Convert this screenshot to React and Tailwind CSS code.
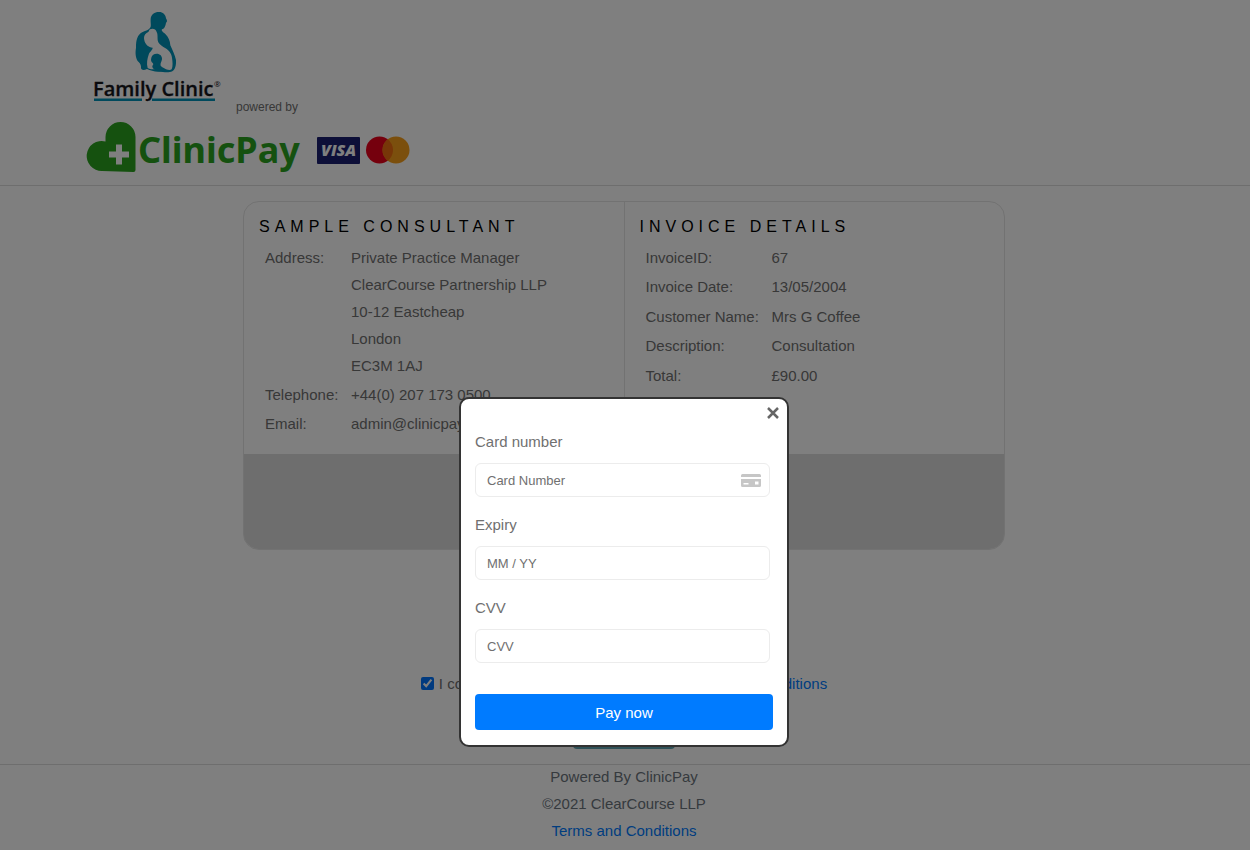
const consultant = [
  {
    label: "Address:",
    lines: [
      "Private Practice Manager",
      "ClearCourse Partnership LLP",
      "10-12 Eastcheap",
      "London",
      "EC3M 1AJ",
    ],
  },
  { label: "Telephone:", lines: ["+44(0) 207 173 0500"] },
  { label: "Email:", lines: ["admin@clinicpay.co.uk"] },
];

const invoice = [
  { label: "InvoiceID:", lines: ["67"] },
  { label: "Invoice Date:", lines: ["13/05/2004"] },
  { label: "Customer Name:", lines: ["Mrs G Coffee"] },
  { label: "Description:", lines: ["Consultation"] },
  { label: "Total:", lines: ["£90.00"] },
];

function FamilyClinicLogo() {
  return (
    <svg
      className="h-[112px] w-[144px]"
      viewBox="0 0 144 112"
      role="img"
      aria-label="Family Clinic"
    >
      <g transform="translate(-5 0) scale(0.33333)">
        <path
          fill="#0092b8"
          d="M236 36 C247 35 257 43 258 55 C262 61 262 66 258 68 C257 76 254 86 246 88 C243 93 250 97 256 102 C266 112 270 122 271 136 C277 150 285 165 288 180 C289 195 286 208 277 214 C266 219 249 216 238 215 C224 216 211 211 201 207 C193 210 186 212 183 205 C184 197 181 191 176 186 C167 178 165 160 168 143 C168 120 172 104 188 96 C198 91 206 90 210 84 C215 79 211 68 212 56 C213 44 224 36 236 36 Z"
        />
        <path
          fill="#fff"
          d="M210 88 C219 84 227 87 230 96 C234 103 232 112 233 121 C234 130 242 136 250 141 C265 148 275 160 276 173 C278 186 279 199 275 208 C270 212 264 209 258 208 C250 208 242 209 236 208 C224 208 211 209 203 204 C199 190 202 175 206 164 C208 155 218 151 218 143 C206 143 195 133 193 121 C190 110 195 100 204 97 C208 95 206 90 210 88 Z"
        />
        <path
          fill="#0092b8"
          d="M230 161 C240 161 247 168 246 178 C245 186 240 190 242 197 C247 203 253 204 258 208 L256 215 L228 213 C224 208 216 205 217 198 C220 194 221 192 218 189 C213 185 212 180 214 173 C216 165 222 161 230 161 Z"
        />
      </g>
      <text
        x="8"
        y="96"
        fontFamily="'Open Sans', 'Noto Sans', sans-serif"
        fontSize="20"
        fontWeight="600"
        fill="#15151a"
        stroke="#15151a"
        strokeWidth="0.3"
      >
        Family Clinic
      </text>
      <text x="129" y="87" fontFamily="'Open Sans', sans-serif" fontSize="8" fill="#15151a">
        ®
      </text>
      <path fill="#0092b8" d="M9 98.500h48v2.500h-48zM67 98.500h63v2.500h-63z" />
    </svg>
  );
}

function ClinicPayLogo() {
  return (
    <svg
      className="h-[54px] w-[220px]"
      viewBox="0 0 220 54"
      role="img"
      aria-label="ClinicPay"
    >
      <path
        fill="#2aa31f"
        d="M20.500 21.500 V17 A15 15 0 0 1 50.500 17 V50 Q50.500 52 48.500 52 L17 51 A15 15 0 1 1 20.500 21.500 Z"
      />
      <path fill="#fff" d="M31 24.500h6v7h7v6h-7v7h-6v-7h-7v-6h7z" />
      <text
        x="53"
        y="43"
        fontFamily="'Noto Sans', 'Open Sans', sans-serif"
        fontSize="36"
        fontWeight="700"
        fill="#2aa31f"
      >
        ClinicPay
      </text>
    </svg>
  );
}

function CardBrands() {
  return (
    <svg
      className="h-7 w-[93px]"
      viewBox="0 0 93 28"
      role="img"
      aria-label="Visa and Mastercard"
    >
      <rect x="0" y="1" width="43" height="27" rx="1" fill="#1a1f71" />
      <text
        x="4"
        y="20"
        fontFamily="'Open Sans', 'Noto Sans', sans-serif"
        fontSize="16"
        fontStyle="italic"
        fontWeight="800"
        fill="#fff"
      >
        VISA
      </text>
      <circle cx="62.500" cy="14" r="13.500" fill="#eb001b" />
      <circle cx="79" cy="14" r="13.500" fill="#f79e1b" />
      <path fill="#ee6c10" d="M70.750 3.300a13.500 13.500 0 0 1 0 21.400a13.500 13.500 0 0 1 0-21.400z" />
    </svg>
  );
}

function CardIcon() {
  return (
    <svg className="h-[13px] w-5" viewBox="0 0 20 13" aria-hidden="true">
      <path fill="#c6c6c6" d="M1.500 0h17A1.500 1.500 0 0 1 20 1.500V3H0V1.500A1.500 1.500 0 0 1 1.500 0z" />
      <path
        fill="#c6c6c6"
        fillRule="evenodd"
        d="M0 5h20v6.500a1.500 1.500 0 0 1-1.500 1.500h-17A1.500 1.500 0 0 1 0 11.500zM2.500 9v1.500h5V9zM14 7.500v3h3.500v-3z"
      />
    </svg>
  );
}

function CloseIcon() {
  return (
    <svg className="size-3" viewBox="0 0 12 12" aria-hidden="true">
      <path d="M1 1l10 10M11 1L1 11" stroke="currentColor" strokeWidth="2.500" />
    </svg>
  );
}

function DetailPanel({ title, rows, labelWidth, tableHeight }) {
  return (
    <section className="flex-1 px-[15px] pt-[13px] pb-[15px]">
      <h2 className="text-base leading-6 tracking-[5px] text-black uppercase">{title}</h2>
      <table className={`mt-1 ml-[5px] ${tableHeight}`}>
        <tbody>
          {rows.map((row) => (
            <tr key={row.label}>
              <th scope="row" className={`${labelWidth} p-px text-left align-top font-normal`}>
                {row.label}
              </th>
              <td className="p-px align-top">
                {row.lines.map((line) => (
                  <div key={line}>{line}</div>
                ))}
              </td>
            </tr>
          ))}
        </tbody>
      </table>
    </section>
  );
}

function Field({ id, label, placeholder, icon }) {
  return (
    <div className="mr-[3px] mb-[14px]">
      <label htmlFor={id} className="mb-2 block">
        {label}
      </label>
      <div className="relative">
        <input
          id={id}
          type="text"
          inputMode="numeric"
          placeholder={placeholder}
          className="block h-[34px] w-full rounded-md border border-[#ececec] bg-white px-[11px] text-[13px] text-[#555] placeholder:text-[#707070]"
        />
        {icon && <span className="absolute inset-y-0 right-[9px] flex items-center">{icon}</span>}
      </div>
    </div>
  );
}

function PaymentDialog() {
  return (
    <div className="fixed inset-0 flex items-start justify-center bg-black/50 pt-[397px] pr-0.5">
      <div
        role="dialog"
        aria-label="Card payment"
        aria-modal="true"
        className="relative w-[330px] rounded-[10px] border-2 border-[#333] bg-white px-[14px] pt-[29px] pb-[15px]"
      >
        <button
          type="button"
          aria-label="Close"
          className="absolute top-1 right-1 flex size-5 items-center justify-center text-[#666]"
        >
          <CloseIcon />
        </button>
        <form onSubmit={(event) => event.preventDefault()}>
          <Field id="card-number" label="Card number" placeholder="Card Number" icon={<CardIcon />} />
          <Field id="expiry" label="Expiry" placeholder="MM / YY" />
          <Field id="cvv" label="CVV" placeholder="CVV" />
          <button
            type="submit"
            className="mt-[31px] block h-9 w-full rounded bg-[#007bff] text-white"
          >
            Pay now
          </button>
        </form>
      </div>
    </div>
  );
}

export default function App() {
  return (
    <div className="min-h-screen bg-white font-['Liberation_Sans',Arial,sans-serif] text-[15px] leading-[27px] text-[#707070]">
      <header className="border-b border-[#dcdcdc] pb-[11px]">
        <div className="mx-auto max-w-[1080px]">
          <div className="flex items-end gap-[7px]">
            <FamilyClinicLogo />
            <span className="text-xs leading-[10px]">powered by</span>
          </div>
          <div className="mt-2 flex items-end gap-3">
            <ClinicPayLogo />
            <div className="pb-[10px]">
              <CardBrands />
            </div>
          </div>
        </div>
      </header>

      <main className="pt-[15px] pr-0.5">
        <div className="mx-auto max-w-[762px] overflow-hidden rounded-2xl border border-[#e4e4e4]">
          <div className="flex min-h-[252px] divide-x divide-[#e4e4e4]">
            <DetailPanel
              title="Sample Consultant"
              rows={consultant}
              labelWidth="w-[86px]"
              tableHeight="h-auto"
            />
            <DetailPanel
              title="Invoice Details"
              rows={invoice}
              labelWidth="w-[126px]"
              tableHeight="h-[147px]"
            />
          </div>
          <div className="h-[95px] bg-[#dcdcdc]" />
        </div>

        <div className="mt-[120px] flex items-center justify-center gap-[5px]">
          <input id="consent" type="checkbox" defaultChecked className="size-[13px] accent-[#0075ff]" />
          <span>
            <label htmlFor="consent">I confirm I have read and accept the</label>{" "}
            <a href="#terms" className="text-[#007bff]">
              Terms and Conditions
            </a>
          </span>
        </div>
        <div className="mt-[14px] flex justify-center">
          <button type="button" className="h-[38px] w-[102px] rounded bg-[#5fa3b0] text-white">
            Pay
          </button>
        </div>
      </main>

      <footer className="mt-[15px] border-t border-[#dcdcdc] pr-0.5 text-center text-[#6c757d]">
        <div className="-mt-0.5">
          <p>Powered By ClinicPay</p>
          <p>©2021 ClearCourse LLP</p>
          <a href="#terms" className="text-[#007bff]">
            Terms and Conditions
          </a>
        </div>
      </footer>

      <PaymentDialog />
    </div>
  );
}
